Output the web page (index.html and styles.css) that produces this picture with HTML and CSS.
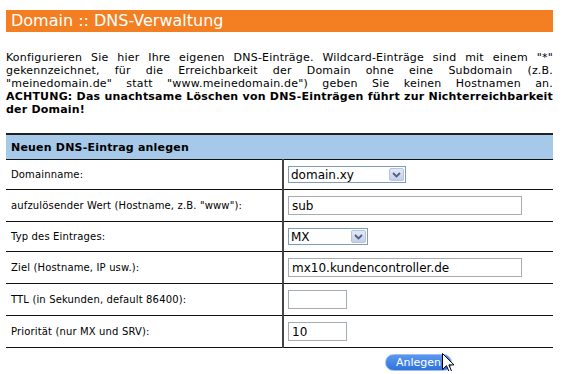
FILE: index.html
```html
<!DOCTYPE html>
<html lang="de">

<head>
  <meta charset="UTF-8">
  <title>Domain :: DNS-Verwaltung</title>
  <link rel="stylesheet" href="styles.css">
</head>

<body>
  <div class="page">
    <h1 class="title">Domain :: DNS-Verwaltung</h1>

    <p class="intro">
      <span class="intro-lines">Konfigurieren Sie hier Ihre eigenen DNS-Einträge. Wildcard-Einträge sind mit einem "*"<br>
      gekennzeichnet, für die Erreichbarkeit der Domain ohne eine Subdomain (z.B.<br>
      "meinedomain.de" statt "www.meinedomain.de") geben Sie keinen Hostnamen an.<br>
      <strong>ACHTUNG: Das unachtsame Löschen von DNS-Einträgen führt zur Nichterreichbarkeit</strong></span>
      <strong>der Domain!</strong>
    </p>

    <form class="dns-form" onsubmit="return false;">
      <table class="dns-table">
        <thead>
          <tr>
            <th colspan="2">Neuen DNS-Eintrag anlegen</th>
          </tr>
        </thead>
        <tbody>
          <tr>
            <td class="label">Domainname:</td>
            <td class="field">
              <span class="select select-domain">
                <select name="domain">
                  <option>domain.xy</option>
                </select>
                <span class="select-arrow">
                  <svg width="9" height="6" viewBox="0 0 9 6"><path d="M1 1 L4.5 4.5 L8 1" fill="none" stroke="#4d6185" stroke-width="1.8"/></svg>
                </span>
              </span>
            </td>
          </tr>
          <tr>
            <td class="label">aufzulösender Wert (Hostname, z.B. "www"):</td>
            <td class="field"><input type="text" class="text-wide" value="sub"></td>
          </tr>
          <tr>
            <td class="label">Typ des Eintrages:</td>
            <td class="field">
              <span class="select select-type">
                <select name="type">
                  <option>MX</option>
                </select>
                <span class="select-arrow">
                  <svg width="9" height="6" viewBox="0 0 9 6"><path d="M1 1 L4.5 4.5 L8 1" fill="none" stroke="#4d6185" stroke-width="1.8"/></svg>
                </span>
              </span>
            </td>
          </tr>
          <tr>
            <td class="label">Ziel (Hostname, IP usw.):</td>
            <td class="field"><input type="text" class="text-wide" value="mx10.kundencontroller.de"></td>
          </tr>
          <tr>
            <td class="label">TTL (in Sekunden, default 86400):</td>
            <td class="field"><input type="text" class="text-small" value=""></td>
          </tr>
          <tr>
            <td class="label">Priorität (nur MX und SRV):</td>
            <td class="field"><input type="text" class="text-small" value="10"></td>
          </tr>
        </tbody>
      </table>

      <div class="actions">
        <span class="button-wrap">
          <button type="submit" class="btn">Anlegen</button>
          <svg class="cursor" width="13" height="21" viewBox="0 0 13 21">
            <path d="M0.5 0.5 L0.5 16.5 L4.5 12.7 L7.3 19.3 L9.6 18.3 L6.9 11.9 L12 11.9 Z" fill="#fff" stroke="#000" stroke-width="1"/>
          </svg>
        </span>
      </div>
    </form>
  </div>
</body>

</html>
```

FILE: styles.css
```css
body {
  margin: 0;
  background: #fff;
  color: #000;
  font-family: "DejaVu Sans", Verdana, sans-serif;
}

.page {
  width: 547px;
  padding: 10px 0 0 6px;
}

.title {
  margin: 0;
  height: 22px;
  line-height: 22px;
  padding-left: 5px;
  background-color: #f47f22;
  color: #fff;
  font-size: 16px;
  font-weight: normal;
}

.intro {
  margin: 19px 0 0;
  font-size: 11px;
  line-height: 13px;
  letter-spacing: 0.2px;
  text-align: justify;
}

.intro-lines {
  display: block;
  text-align-last: justify;
}

.dns-table {
  width: 100%;
  margin-top: 17px;
  border-collapse: collapse;
}

.dns-table th {
  height: 24px;
  padding: 0 5px;
  background-color: #a6c8e9;
  border-top: 2px solid #222;
  border-bottom: 1px solid #111;
  text-align: left;
  font-size: 11px;
  font-weight: bold;
  letter-spacing: 0.2px;
}

.dns-table td {
  padding: 6px 4px 6px 5px;
  border-bottom: 1px solid #111;
  vertical-align: middle;
  line-height: 13px;
}

.dns-table .label {
  width: 267px;
  border-right: 2px solid #444;
  font-size: 10px;
  letter-spacing: 0.15px;
}

.dns-table .field {
  padding-left: 4px;
}

input[type="text"] {
  box-sizing: border-box;
  height: 19px;
  margin: 0;
  padding: 0 3px;
  border: 1px solid #a5acb2;
  font-family: "DejaVu Sans", Verdana, sans-serif;
  font-size: 12px;
  display: block;
}

.text-wide {
  width: 234px;
}

.text-small {
  width: 59px;
}

.select {
  position: relative;
  display: block;
  width: fit-content;
  height: 17px;
}

.select select {
  box-sizing: border-box;
  appearance: none;
  -webkit-appearance: none;
  height: 17px;
  margin: 0;
  padding: 0 2px;
  border: 1px solid #7f9db9;
  border-radius: 0;
  background: #fff;
  font-family: "DejaVu Sans", Verdana, sans-serif;
  font-size: 12px;
  color: #000;
  display: block;
}

.select-domain select {
  width: 118px;
}

.select-type select {
  width: 80px;
}

.select-arrow {
  position: absolute;
  top: 2px;
  right: 2px;
  width: 15px;
  height: 13px;
  box-sizing: border-box;
  border: 1px solid #b6c4e4;
  border-radius: 2px;
  background: linear-gradient(#e4e8f6, #c5cfe8);
  display: flex;
  align-items: center;
  justify-content: center;
  pointer-events: none;
}

.actions {
  padding: 3px 0 0 379px;
}

.button-wrap {
  position: relative;
  display: inline-block;
}

.btn {
  display: block;
  height: 17px;
  padding: 0 10px;
  border: 1px solid #9dbcf0;
  border-radius: 9px;
  background: linear-gradient(#5a98ee, #2f74dc);
  color: #fff;
  font-family: "DejaVu Sans", Verdana, sans-serif;
  font-size: 11px;
  line-height: 15px;
  cursor: pointer;
}

.cursor {
  position: absolute;
  left: 57px;
  top: -1px;
}
```
